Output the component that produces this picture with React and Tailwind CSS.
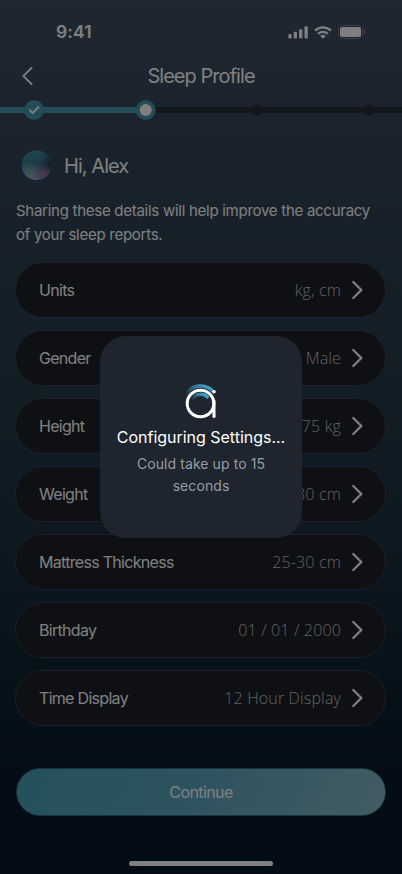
import React from 'react';

const SETTINGS = [
  { label: 'Units', value: 'kg, cm' },
  { label: 'Gender', value: 'Male' },
  { label: 'Height', value: '175 kg' },
  { label: 'Weight', value: '180 cm' },
  { label: 'Mattress Thickness', value: '25-30 cm' },
  { label: 'Birthday', value: '01 / 01 / 2000' },
  { label: 'Time Display', value: '12 Hour Display' },
];

const StatusBar = () => (
  <div className="flex h-[54px] items-start justify-between pt-[22px] pl-[56px] pr-[36px]">
    <span className="text-[17.5px] leading-5 font-semibold tracking-[0.15px]">9:41</span>
    <div className="flex items-center gap-[6px] pt-[3px]">
      <svg width="20" height="13" viewBox="0 0 20 13" fill="currentColor">
        <rect x="0.3" y="8" width="3.3" height="4.5" rx="1" />
        <rect x="5.7" y="5.8" width="3.3" height="6.7" rx="1" />
        <rect x="11.1" y="3.3" width="3.3" height="9.2" rx="1" />
        <rect x="16.5" y="0.3" width="3.3" height="12.2" rx="1" />
      </svg>
      <svg width="18" height="13" viewBox="0 0 18 13" fill="none" stroke="currentColor" strokeWidth="2.4">
        <path d="M1.100 4.600a11.300 11.300 0 0 1 15.800 0" />
        <path d="M4.100 7.900a7 7 0 0 1 9.800 0" />
        <path d="M9 12.700 6.200 10a3.800 3.800 0 0 1 5.600 0z" fill="currentColor" stroke="none" />
      </svg>
      <svg width="28" height="14" viewBox="0 0 28 14" fill="none">
        <rect x="0.5" y="0.5" width="24" height="13" rx="4.2" stroke="currentColor" opacity="0.3" />
        <rect x="2" y="2" width="21" height="10" rx="2.7" fill="currentColor" />
        <path d="M26 5v4.200c.8-.35 1.400-1.200 1.400-2.100S26.800 5.350 26 5z" fill="currentColor" opacity="0.4" />
      </svg>
    </div>
  </div>
);

const Header = () => (
  <div className="grid h-[44px] grid-cols-3 items-center">
    <button className="pl-[21px]">
      <svg width="13" height="18" viewBox="0 0 13 18" fill="none" stroke="currentColor" strokeWidth="1.8" strokeLinecap="round">
        <path d="M10.500 1 2.300 9l8.200 8" />
      </svg>
    </button>
    <h1 className="text-center text-[20px] font-normal tracking-[-0.95px] whitespace-nowrap">Sleep Profile</h1>
  </div>
);

const Stepper = () => (
  <svg className="block" width="402" height="24" viewBox="0 0 402 24" fill="none">
    <path d="M146 12h256" stroke="#292f34" strokeWidth="6" />
    <path d="M0 12h146" stroke="#4798b1" strokeWidth="6" />
    <circle cx="257.300" cy="12" r="6" fill="#292f34" />
    <circle cx="369" cy="12" r="6" fill="#292f34" />
    <circle cx="34" cy="12" r="10" fill="#4798b1" />
    <path d="m29.800 12.200 3 2.800 5.600-5.800" stroke="white" strokeWidth="1.900" strokeLinecap="round" strokeLinejoin="round" />
    <circle cx="145.700" cy="12" r="10" fill="#4798b1" />
    <circle cx="145.700" cy="12" r="6" fill="white" />
  </svg>
);

const Avatar = () => (
  <svg width="36" height="36" viewBox="0 0 36 36">
    <defs>
      <linearGradient id="orb" x1="0.4" y1="0" x2="0.6" y2="1">
        <stop offset="0" stopColor="#3c8a9e" />
        <stop offset="0.45" stopColor="#3a788e" />
        <stop offset="0.75" stopColor="#6f8299" />
        <stop offset="1" stopColor="#a9a0bb" />
      </linearGradient>
      <radialGradient id="orbShade" cx="1" cy="0.5" r="0.45">
        <stop offset="0" stopColor="#1c3047" />
        <stop offset="0.35" stopColor="#263c54" stopOpacity="0.7" />
        <stop offset="1" stopColor="#2a4660" stopOpacity="0" />
      </radialGradient>
      <radialGradient id="orbPink" cx="0.77" cy="0.83" r="0.35">
        <stop offset="0" stopColor="#9a70a4" />
        <stop offset="1" stopColor="#8a6796" stopOpacity="0" />
      </radialGradient>
      <radialGradient id="orbLight" cx="0.25" cy="0.8" r="0.42">
        <stop offset="0" stopColor="#8fb0ba" stopOpacity="0.85" />
        <stop offset="1" stopColor="#8fb0ba" stopOpacity="0" />
      </radialGradient>
    </defs>
    <circle cx="17.300" cy="18.200" r="16.800" fill="#2f4c6b" />
    <circle cx="17.800" cy="17.300" r="15.600" fill="#223448" />
    <circle cx="18.300" cy="17.200" r="15" fill="url(#orb)" />
    <circle cx="18.300" cy="17.200" r="15" fill="url(#orbLight)" />
    <circle cx="18.300" cy="17.200" r="15" fill="url(#orbShade)" />
    <circle cx="18.300" cy="17.200" r="15" fill="url(#orbPink)" />
  </svg>
);

const SettingRow = ({ label, value }) => (
  <button className="flex h-14 w-full items-center rounded-full border border-[#3a4149] bg-[#1c2129] pr-[21px] pl-[23px]">
    <span className="text-[16px] font-normal tracking-[-0.7px]">{label}</span>
    <span className="ml-auto font-['Open_Sans','Noto_Sans',sans-serif] text-[16px] font-light tracking-[0.15px] text-[#c0c1c4]">{value}</span>
    <svg className="ml-[10px]" width="13" height="20" viewBox="0 0 13 20" fill="none" stroke="currentColor" strokeWidth="2.3" strokeLinecap="round">
      <path d="m2.300 2 8 8-8 8" />
    </svg>
  </button>
);

const BrandLogo = () => (
  <svg width="34" height="36" viewBox="0 0 34 36" fill="none" strokeLinecap="round">
    <defs>
      <linearGradient id="arc" x1="1" y1="0" x2="0" y2="0.7">
        <stop offset="0" stopColor="#48acd0" />
        <stop offset="0.45" stopColor="#347c98" />
        <stop offset="1" stopColor="#1e252f" />
      </linearGradient>
    </defs>
    <path d="M1.500 15C2.500 6.500 9 2 16 2c4.500 0 9 1.500 12 4.500" stroke="url(#arc)" strokeWidth="3.600" />
    <path d="M8.500 18.500c-.5-5 3.500-8.200 8-8.200 2.700 0 5 .9 6.700 2.700" stroke="url(#arc)" strokeWidth="3.400" />
    <circle cx="16.500" cy="19.500" r="13.300" stroke="white" strokeWidth="3" />
    <path d="M30 17v15.500" stroke="white" strokeWidth="3" />
    <circle cx="30" cy="7.800" r="1.800" fill="white" />
  </svg>
);

const LoadingModal = () => (
  <div className="absolute inset-0 flex items-center justify-center bg-black/50">
    <div className="flex h-[202px] w-[202px] flex-col items-center rounded-[26px] bg-[#1e252e] pt-12">
      <BrandLogo />
      <p className="mt-[7px] text-[16px] leading-5 tracking-[-0.02px] whitespace-nowrap">Configuring Settings...</p>
      <p className="mt-[6px] w-[150px] text-center text-[14px] leading-[22px] tracking-[0.08px] text-[#979da6]">
        Could take up to 15 seconds
      </p>
    </div>
  </div>
);

const App = () => {
  return (
    <div className="relative flex h-[874px] w-[402px] flex-col overflow-hidden bg-linear-to-b from-[#3e4e62] via-[#1f3645] via-55% to-[#081b2d] to-88% font-['Inter',sans-serif] text-white">
      <StatusBar />
      <Header />
      <Stepper />
      <div className="mt-[26px] flex items-center gap-[10px] pl-[18px]">
        <Avatar />
        <h2 className="text-[20px] leading-9 font-normal tracking-[-0.95px]">Hi, Alex</h2>
      </div>
      <p className="mt-[15px] pl-4 text-[15px] leading-6 tracking-[-0.27px] whitespace-nowrap">
        Sharing these details will help improve the accuracy
        <br />
        of your sleep reports.
      </p>
      <div className="mt-[15px] flex flex-col gap-3 pr-4 pl-[15px]">
        {SETTINGS.map((item) => (
          <SettingRow key={item.label} label={item.label} value={item.value} />
        ))}
      </div>
      <button className="mx-4 mt-[42px] h-12 shrink-0 rounded-full border border-[#286e80] bg-linear-120 from-[#46a0b8] via-[#5ea7c1] via-50% to-[#88b8c4] text-[16px] tracking-[-0.6px]">
        Continue
      </button>
      {/* home indicator */}
      <div className="mx-auto mt-[45px] h-[5px] w-36 shrink-0 rounded-full bg-white" />
      <LoadingModal />
    </div>
  );
};

export default App;
